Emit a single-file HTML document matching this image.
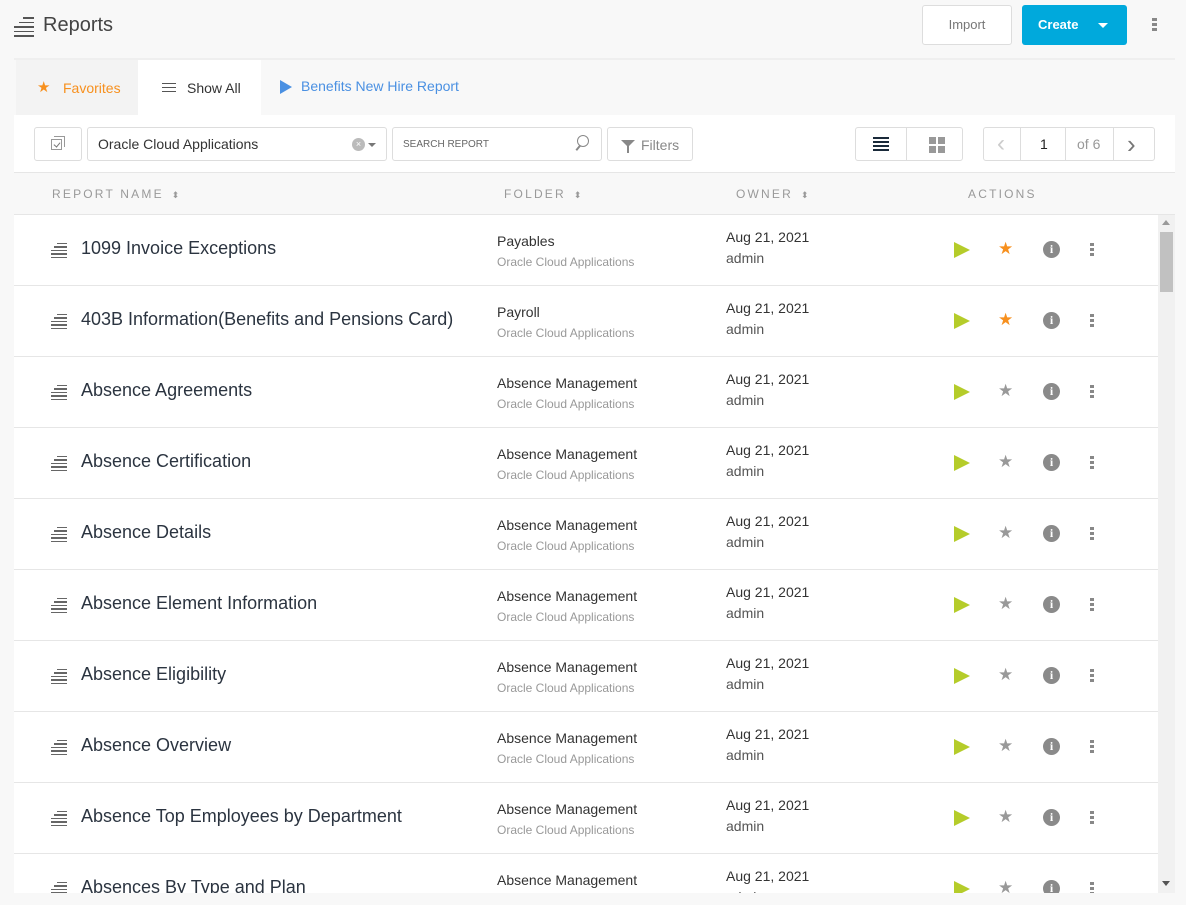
<!DOCTYPE html>
<html><head><meta charset="utf-8"><style>
*{box-sizing:border-box;margin:0;padding:0}
body{width:1186px;height:905px;overflow:hidden;background:#f8f8f8;font-family:"Liberation Sans",sans-serif;color:#333;position:relative}
.abs{position:absolute}
.btn{position:absolute;border:1px solid #ddd;border-radius:3px;background:#fff}
.row{position:absolute;left:14px;width:1144px;height:71px;background:#fff;border-bottom:1px solid #e6e6e6}
.row .t{position:absolute;left:67px;top:23px;font-size:18px;color:#2b3440}
.row .ic{position:absolute;left:37px;top:28px;width:16px}
.row .ic i{display:block;height:1.3px;background:#666;margin-bottom:2.2px}
.row .ic i:first-child{margin-left:6px}
.row .ic i:nth-child(2){margin-left:3px}
.row .f1{position:absolute;left:483px;top:18px;font-size:14px;color:#333}
.row .f2{position:absolute;left:483px;top:40px;font-size:12px;color:#999}
.row .d1{position:absolute;left:712px;top:14px;font-size:14px;color:#333}
.row .d2{position:absolute;left:712px;top:35px;font-size:14px;color:#555}
.row .play{position:absolute;left:940px;top:27px;width:0;height:0;border-left:16px solid #b5cc2a;border-top:8px solid transparent;border-bottom:8px solid transparent}
.row .star{position:absolute;left:984px;top:24px;font-size:17px;color:#999}
.row .star.on{color:#f7901e}
.row .info{position:absolute;left:1029px;top:26px;width:17px;height:17px;border-radius:50%;background:#8a8a8a;color:#fff;font:bold 12px "Liberation Serif",serif;text-align:center;line-height:17px}
.row .dots{position:absolute;left:1076px;top:28px;width:4px}
.row .dots i{display:block;width:4px;height:3px;background:#888;margin-bottom:2px}
.hd{position:absolute;top:187px;font-size:12px;letter-spacing:2.2px;color:#999}
.hd b{font-weight:normal;font-size:9px;letter-spacing:0;margin-left:8px}
</style></head><body>
<div class="abs" style="left:14px;top:17px;width:20px">
<div style="height:1.5px;background:#555;margin:0 0 3px 9px"></div><div style="height:1.5px;background:#555;margin:0 0 3px 5px"></div><div style="height:1.5px;background:#555;margin-bottom:3px"></div><div style="height:1.5px;background:#555;margin-bottom:3px"></div><div style="height:1.5px;background:#555"></div></div>
<div class="abs" style="left:43px;top:14px;font-size:20px;color:#444">Reports</div>
<div class="btn" style="left:922px;top:5px;width:90px;height:40px;text-align:center;line-height:38px;font-size:13px;color:#777">Import</div>
<div class="abs" style="left:1022px;top:5px;width:105px;height:40px;background:#00a9dc;border-radius:3px;color:#fff;font-size:13px;font-weight:bold;line-height:40px;padding-left:16px">Create<span style="position:absolute;left:76px;top:18px;border-left:5px solid transparent;border-right:5px solid transparent;border-top:5px solid #fff"></span></div>
<div class="abs" style="left:1152px;top:18px;width:5px"><div style="height:3px;background:#888;margin-bottom:2px"></div><div style="height:3px;background:#888;margin-bottom:2px"></div><div style="height:3px;background:#888"></div></div>
<div class="abs" style="left:14px;top:58px;width:1161px;height:2px;background:#efefef"></div>
<div class="abs" style="left:16px;top:60px;width:122px;height:55px;background:#f3f3f3"></div>
<div class="abs" style="left:37px;top:78px;font-size:15px;color:#f7901e">★</div>
<div class="abs" style="left:63px;top:80px;font-size:14px;color:#f7901e">Favorites</div>
<div class="abs" style="left:138px;top:60px;width:123px;height:56px;background:#fff"></div>
<div class="abs" style="left:162px;top:83px;width:14px"><div style="height:1.3px;background:#555;margin-bottom:2.5px"></div><div style="height:1.3px;background:#555;margin-bottom:2.5px"></div><div style="height:1.3px;background:#555"></div></div>
<div class="abs" style="left:187px;top:80px;font-size:14px;color:#333">Show All</div>
<div class="abs" style="left:280px;top:80px;width:0;height:0;border-left:12px solid #4a90e2;border-top:7px solid transparent;border-bottom:7px solid transparent"></div>
<div class="abs" style="left:301px;top:78px;font-size:14px;color:#4a90e2">Benefits New Hire Report</div>
<div class="abs" style="left:14px;top:115px;width:1161px;height:58px;background:#fff;border-bottom:1px solid #e6e6e6"></div>
<div class="btn" style="left:34px;top:127px;width:48px;height:34px"><div style="position:absolute;left:16px;top:11px;width:11px;height:11px;border:1.5px solid #999"></div><div style="position:absolute;left:19px;top:8px;width:11px;height:11px;border-top:1.5px solid #999;border-right:1.5px solid #999"></div><div style="position:absolute;left:20px;top:13px;width:4px;height:6px;border-right:1.5px solid #777;border-bottom:1.5px solid #777;transform:rotate(40deg)"></div></div>
<div class="btn" style="left:87px;top:127px;width:300px;height:34px"><span style="position:absolute;left:10px;top:8px;font-size:14px;color:#333">Oracle Cloud Applications</span><span style="position:absolute;left:264px;top:10px;width:13px;height:13px;border-radius:50%;background:#bbb;color:#fff;font-size:9px;text-align:center;line-height:13px">×</span><span style="position:absolute;left:280px;top:15px;border-left:4px solid transparent;border-right:4px solid transparent;border-top:4px solid #777"></span></div>
<div class="btn" style="left:392px;top:127px;width:210px;height:34px"><span style="position:absolute;left:10px;top:11px;font-size:10px;color:#666">SEARCH REPORT</span><span style="position:absolute;left:184px;top:7px;width:12px;height:12px;border:1.5px solid #888;border-radius:50%"></span><span style="position:absolute;left:182px;top:19px;width:6px;height:1.5px;background:#888;transform:rotate(-50deg)"></span></div>
<div class="btn" style="left:607px;top:127px;width:86px;height:34px"><span style="position:absolute;left:13px;top:12px;border-left:7px solid transparent;border-right:7px solid transparent;border-top:7px solid #888"></span><span style="position:absolute;left:19px;top:17px;width:2px;height:8px;background:#888"></span><span style="position:absolute;left:33px;top:9px;font-size:14px;color:#888">Filters</span></div>
<div class="btn" style="left:855px;top:127px;width:108px;height:34px"><div style="position:absolute;left:50px;top:0;width:1px;height:32px;background:#ddd"></div>
<div style="position:absolute;left:17px;top:9px;width:16px"><div style="height:2px;background:#1a2a3a;margin-bottom:2px"></div><div style="height:2px;background:#1a2a3a;margin-bottom:2px"></div><div style="height:2px;background:#1a2a3a;margin-bottom:2px"></div><div style="height:2px;background:#1a2a3a"></div></div>
<div style="position:absolute;left:73px;top:9px;width:7px;height:7px;background:#999"></div><div style="position:absolute;left:82px;top:9px;width:7px;height:7px;background:#999"></div><div style="position:absolute;left:73px;top:18px;width:7px;height:7px;background:#999"></div><div style="position:absolute;left:82px;top:18px;width:7px;height:7px;background:#999"></div></div>
<div class="btn" style="left:983px;top:127px;width:172px;height:34px"><div style="position:absolute;left:36px;top:0;width:1px;height:32px;background:#ddd"></div><div style="position:absolute;left:81px;top:0;width:1px;height:32px;background:#ddd"></div><div style="position:absolute;left:129px;top:0;width:1px;height:32px;background:#ddd"></div>
<span style="position:absolute;left:13px;top:2px;font-size:24px;color:#ccc">‹</span><span style="position:absolute;left:56px;top:8px;font-size:14px;color:#222">1</span><span style="position:absolute;left:93px;top:8px;font-size:14px;color:#999">of 6</span><span style="position:absolute;left:143px;top:1px;font-size:26px;color:#777">›</span></div>
<div class="abs" style="left:14px;top:174px;width:1161px;height:41px;background:#f8f8f8;border-bottom:1px solid #e6e6e6"></div>
<div class="hd" style="left:52px">REPORT NAME<b>⬍</b></div>
<div class="hd" style="left:504px">FOLDER<b>⬍</b></div>
<div class="hd" style="left:736px">OWNER<b>⬍</b></div>
<div class="hd" style="left:968px">ACTIONS</div>
<div class="abs" style="left:1158px;top:215px;width:17px;height:678px;background:#f1f1f1"></div>
<div class="abs" style="left:1160px;top:232px;width:13px;height:60px;background:#c1c1c1"></div>
<div class="abs" style="left:1162px;top:220px;border-left:4px solid transparent;border-right:4px solid transparent;border-bottom:5px solid #999"></div>
<div class="abs" style="left:1162px;top:881px;border-left:4px solid transparent;border-right:4px solid transparent;border-top:5px solid #555"></div>
<div class="abs" style="left:14px;top:215px;width:1144px;height:678px;overflow:hidden">
<div style="position:relative;left:-14px;top:-215px">
<div class="row" style="top:215px"><div class="ic"><i></i><i></i><i></i><i></i><i></i></div><div class="t">1099 Invoice Exceptions</div><div class="f1">Payables</div><div class="f2">Oracle Cloud Applications</div><div class="d1">Aug 21, 2021</div><div class="d2">admin</div><div class="play"></div><div class="star on">★</div><div class="info">i</div><div class="dots"><i></i><i></i><i></i></div></div>
<div class="row" style="top:286px"><div class="ic"><i></i><i></i><i></i><i></i><i></i></div><div class="t">403B Information(Benefits and Pensions Card)</div><div class="f1">Payroll</div><div class="f2">Oracle Cloud Applications</div><div class="d1">Aug 21, 2021</div><div class="d2">admin</div><div class="play"></div><div class="star on">★</div><div class="info">i</div><div class="dots"><i></i><i></i><i></i></div></div>
<div class="row" style="top:357px"><div class="ic"><i></i><i></i><i></i><i></i><i></i></div><div class="t">Absence Agreements</div><div class="f1">Absence Management</div><div class="f2">Oracle Cloud Applications</div><div class="d1">Aug 21, 2021</div><div class="d2">admin</div><div class="play"></div><div class="star">★</div><div class="info">i</div><div class="dots"><i></i><i></i><i></i></div></div>
<div class="row" style="top:428px"><div class="ic"><i></i><i></i><i></i><i></i><i></i></div><div class="t">Absence Certification</div><div class="f1">Absence Management</div><div class="f2">Oracle Cloud Applications</div><div class="d1">Aug 21, 2021</div><div class="d2">admin</div><div class="play"></div><div class="star">★</div><div class="info">i</div><div class="dots"><i></i><i></i><i></i></div></div>
<div class="row" style="top:499px"><div class="ic"><i></i><i></i><i></i><i></i><i></i></div><div class="t">Absence Details</div><div class="f1">Absence Management</div><div class="f2">Oracle Cloud Applications</div><div class="d1">Aug 21, 2021</div><div class="d2">admin</div><div class="play"></div><div class="star">★</div><div class="info">i</div><div class="dots"><i></i><i></i><i></i></div></div>
<div class="row" style="top:570px"><div class="ic"><i></i><i></i><i></i><i></i><i></i></div><div class="t">Absence Element Information</div><div class="f1">Absence Management</div><div class="f2">Oracle Cloud Applications</div><div class="d1">Aug 21, 2021</div><div class="d2">admin</div><div class="play"></div><div class="star">★</div><div class="info">i</div><div class="dots"><i></i><i></i><i></i></div></div>
<div class="row" style="top:641px"><div class="ic"><i></i><i></i><i></i><i></i><i></i></div><div class="t">Absence Eligibility</div><div class="f1">Absence Management</div><div class="f2">Oracle Cloud Applications</div><div class="d1">Aug 21, 2021</div><div class="d2">admin</div><div class="play"></div><div class="star">★</div><div class="info">i</div><div class="dots"><i></i><i></i><i></i></div></div>
<div class="row" style="top:712px"><div class="ic"><i></i><i></i><i></i><i></i><i></i></div><div class="t">Absence Overview</div><div class="f1">Absence Management</div><div class="f2">Oracle Cloud Applications</div><div class="d1">Aug 21, 2021</div><div class="d2">admin</div><div class="play"></div><div class="star">★</div><div class="info">i</div><div class="dots"><i></i><i></i><i></i></div></div>
<div class="row" style="top:783px"><div class="ic"><i></i><i></i><i></i><i></i><i></i></div><div class="t">Absence Top Employees by Department</div><div class="f1">Absence Management</div><div class="f2">Oracle Cloud Applications</div><div class="d1">Aug 21, 2021</div><div class="d2">admin</div><div class="play"></div><div class="star">★</div><div class="info">i</div><div class="dots"><i></i><i></i><i></i></div></div>
<div class="row" style="top:854px"><div class="ic"><i></i><i></i><i></i><i></i><i></i></div><div class="t">Absences By Type and Plan</div><div class="f1">Absence Management</div><div class="f2">Oracle Cloud Applications</div><div class="d1">Aug 21, 2021</div><div class="d2">admin</div><div class="play"></div><div class="star">★</div><div class="info">i</div><div class="dots"><i></i><i></i><i></i></div></div>
</div></div>
</body></html>
